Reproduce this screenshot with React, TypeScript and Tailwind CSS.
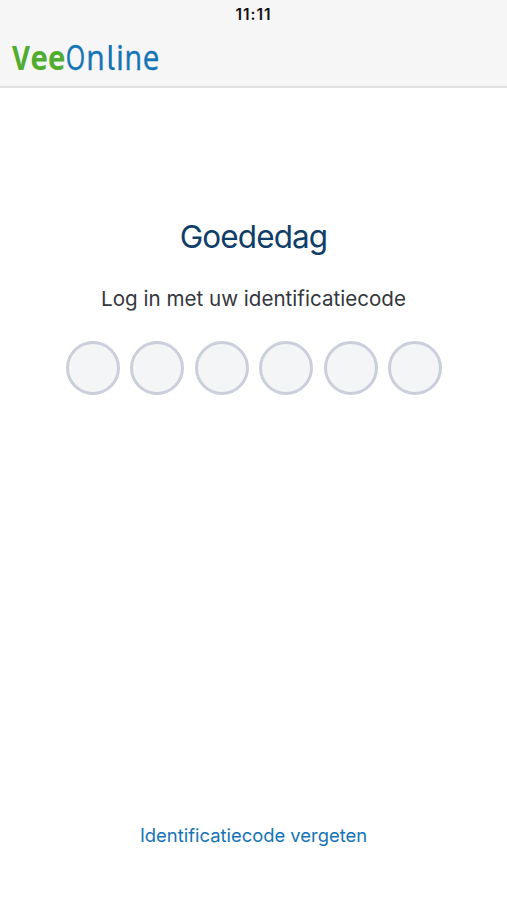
type Glyph = { text: string; x: number; width: number; className: string };

const green = "fill-[#50ad30] font-bold";
const blue = "fill-[#1474b5] stroke-[#1474b5] stroke-[0.4px]";
const blueTailed = "fill-[#1474b5] font-['Inter'] [font-feature-settings:'cv05']";

const wordmark: Glyph[] = [
  { text: "V", x: 0, width: 18, className: green },
  { text: "ee", x: 18.6, width: 34.6, className: green },
  { text: "O", x: 53.8, width: 19.4, className: blue },
  { text: "n", x: 74.2, width: 18.5, className: blue },
  { text: "l", x: 94.2, width: 9, className: blueTailed },
  { text: "i", x: 104, width: 8, className: blue },
  { text: "n", x: 112.6, width: 17.6, className: blue },
  { text: "e", x: 130.8, width: 16.6, className: blue },
];

function Logo() {
  return (
    <svg width="160" height="44" viewBox="0 0 160 44" role="img" aria-label="VeeOnline" className="block overflow-visible font-['Open_Sans',sans-serif] text-[34px]">
      {wordmark.map((glyph, index) => (
        <text key={index} x={glyph.x} y="35" textLength={glyph.width} lengthAdjust="spacingAndGlyphs" className={glyph.className}>
          {glyph.text}
        </text>
      ))}
    </svg>
  );
}

export default function App() {
  return (
    <main className="flex h-[900px] w-full flex-col bg-white font-['Inter','Liberation_Sans',sans-serif]">
      <header className="h-[88px] shrink-0 border-b-2 border-[#dfdfe0] bg-[#f6f6f6]">
        <div className="flex h-[30px] items-center justify-center text-[15.5px] font-semibold tracking-[1px] text-[#111111]">
          <span>11:11</span>
        </div>
        <div className="flex h-[54px] items-start pl-[11.5px] pt-[5px]">
          <Logo />
        </div>
      </header>
      <section className="flex flex-1 flex-col items-center pt-[126px]">
        <h1 className="text-[31.5px] leading-[46px] tracking-[-0.9px] text-[#103e69]">Goededag</h1>
        <p className="mt-[27px] text-[20.6px] leading-[24px] text-[#35373d]">Log in met uw identificatiecode</p>
        <div className="mt-[30px] flex gap-[10.6px] pl-px">
          {[0, 1, 2, 3, 4, 5].map((digit) => (
            <span key={digit} className="size-[54px] rounded-full border-[3px] border-[#cacfdb] bg-[#f3f5f7]" />
          ))}
        </div>
      </section>
      <footer className="flex h-[78px] shrink-0 justify-center">
        <a href="#" className="text-[18.4px] leading-[26px] text-[#1474b5]">Identificatiecode vergeten</a>
      </footer>
    </main>
  );
}
